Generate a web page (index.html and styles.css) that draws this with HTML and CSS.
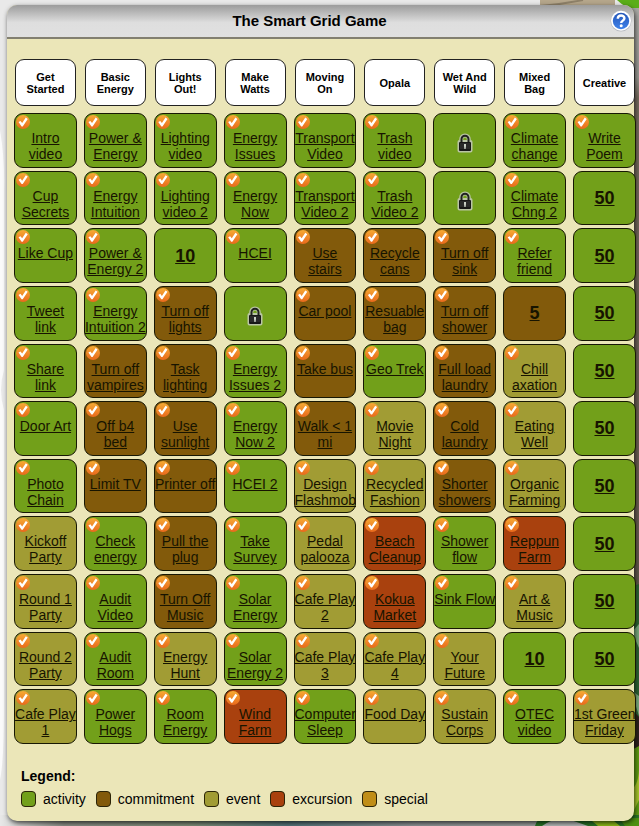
FILE: index.html
```html
<!DOCTYPE html>
<html lang="en">
<head>
<meta charset="utf-8">
<meta name="viewport" content="width=device-width, initial-scale=1">
<title>The Smart Grid Game</title>
<link rel="stylesheet" href="styles.css">
</head>
<body>
<svg width="0" height="0" class="defs" aria-hidden="true">
  <symbol id="lock" viewBox="0 0 16 20">
    <path d="M4.2 9V6.2a3.8 3.8 0 0 1 7.6 0V9M2.5 9h11v8.500h-11z" fill="none" stroke="#b9c4a4" stroke-width="4" stroke-linejoin="round"/>
    <path d="M4.500 9.500V6.200a3.500 3.500 0 0 1 7 0v3.300" fill="none" stroke="#20221f" stroke-width="2"/>
    <rect x="2" y="9" width="12" height="9" rx="1" fill="#171717"/>
    <path d="M3 11h10M3 13h10M3 15h10" stroke="#3c3c3c" stroke-width="1"/>
    <path d="M7 11h2v2l-.4 3H7.400L7 13z" fill="#c9cfc4"/>
  </symbol>
</svg>
<svg class="scenery" viewBox="0 0 639 826" preserveAspectRatio="none" aria-hidden="true">
  <defs>
    <linearGradient id="trunk" x1="0" y1="0" x2="0" y2="1">
      <stop offset="0" stop-color="#a8a8a4"/><stop offset=".1" stop-color="#969590"/>
      <stop offset=".13" stop-color="#74695c"/><stop offset=".75" stop-color="#665a50"/><stop offset="1" stop-color="#4c4a3c"/>
    </linearGradient>
    <linearGradient id="ground" x1="0" y1="0" x2="1" y2="0">
      <stop offset="0" stop-color="#e8e8e8"/><stop offset=".1" stop-color="#8b8f86"/><stop offset=".3" stop-color="#7f8e78"/>
      <stop offset=".45" stop-color="#54757a"/><stop offset=".65" stop-color="#8f9496"/><stop offset="1" stop-color="#a5a9a3"/>
    </linearGradient>
  </defs>
  <path d="M0 130q5 30 4 60v180q-6 20 0 40v300q0 50-4 70z" fill="#fafafa"/>
  <path d="M540 0h75v9h-75z" fill="#b5a68b"/>
  <path d="M541 6q22-2 42-6" stroke="#8e8068" stroke-width="2" fill="none"/>
  <path d="M617 0h22v9q-12 1-22-9z" fill="#5aae19"/>
  <path d="M628 8h11v692h-11z" fill="url(#trunk)"/>
  <path d="M628 588l11-4v242h-11z" fill="#2c6132"/>
  <path d="M632 632l7-8v24zM631 690l8 6v20z" fill="#77a67a"/>
  <path d="M628 705l11 12v32h-11z" fill="#2b211b"/>
  <path d="M628 752l11-6v80h-20z" fill="#5f9b12"/>
  <path d="M630 790q8-3 9-20v30l-9 18z" fill="#a7c62c"/>
  <path d="M0 815h639v11H0z" fill="url(#ground)"/>
  <path d="M535 826q3-10 14-11h90v11z" fill="#287425"/>
  <path d="M542 826q12-9 26-7l20 7z" fill="#b4b9b7"/>
  <path d="M586 816h22l12 10h-22z" fill="#8dbb18"/>
  <path d="M619 818h20v8h-14z" fill="#4d9212"/>
</svg>

<main class="panel">
  <header class="panel-header">
    <h1>The Smart Grid Game</h1>
    <button class="help" type="button" aria-label="Help">
      <svg viewBox="0 0 22 22" aria-hidden="true">
        <defs><linearGradient id="blue" x1="0" y1="0" x2="0" y2="1"><stop offset="0" stop-color="#2456b8"/><stop offset="1" stop-color="#3f82ea"/></linearGradient></defs>
        <circle cx="11" cy="11" r="10.500" fill="#b5b8bf"/>
        <circle cx="11" cy="10.800" r="10" fill="#fff"/>
        <circle cx="11" cy="11" r="8.200" fill="url(#blue)"/>
        <path d="M7.800 8.700c0-4.300 6.600-4.100 6.600-.4 0 2.300-3.200 2.300-3.200 4.700" fill="none" stroke="#fff" stroke-width="2.400"/>
        <circle cx="11.200" cy="15.800" r="1.500" fill="#fff"/>
      </svg>
    </button>
  </header>

  <table class="board">
    <thead>
      <tr>
        <th scope="col"><span>Get<br>Started</span></th>
        <th scope="col"><span>Basic<br>Energy</span></th>
        <th scope="col"><span>Lights<br>Out!</span></th>
        <th scope="col"><span>Make<br>Watts</span></th>
        <th scope="col"><span>Moving<br>On</span></th>
        <th scope="col"><span>Opala</span></th>
        <th scope="col"><span>Wet And<br>Wild</span></th>
        <th scope="col"><span>Mixed<br>Bag</span></th>
        <th scope="col"><span>Creative</span></th>
      </tr>
    </thead>
    <tbody>
      <tr>
        <td class="activity done"><a href="#">Intro<br>video</a></td>
        <td class="activity done"><a href="#">Power &amp;<br>Energy</a></td>
        <td class="activity done"><a href="#">Lighting<br>video</a></td>
        <td class="activity done"><a href="#">Energy<br>Issues</a></td>
        <td class="activity done"><a href="#">Transport<br>Video</a></td>
        <td class="activity done"><a href="#">Trash<br>video</a></td>
        <td class="activity locked"><svg class="lock" role="img" aria-label="Locked"><use href="#lock"/></svg></td>
        <td class="activity done"><a href="#">Climate<br>change</a></td>
        <td class="activity done"><a href="#">Write<br>Poem</a></td>
      </tr>
      <tr>
        <td class="activity done"><a href="#">Cup<br>Secrets</a></td>
        <td class="activity done"><a href="#">Energy<br>Intuition</a></td>
        <td class="activity done"><a href="#">Lighting<br>video 2</a></td>
        <td class="activity done"><a href="#">Energy<br>Now</a></td>
        <td class="activity done"><a href="#">Transport<br>Video 2</a></td>
        <td class="activity done"><a href="#">Trash<br>Video 2</a></td>
        <td class="activity locked"><svg class="lock" role="img" aria-label="Locked"><use href="#lock"/></svg></td>
        <td class="activity done"><a href="#">Climate<br>Chng 2</a></td>
        <td class="activity points"><a href="#">50</a></td>
      </tr>
      <tr>
        <td class="activity done"><a href="#">Like Cup</a></td>
        <td class="activity done"><a href="#">Power &amp;<br>Energy 2</a></td>
        <td class="activity points"><a href="#">10</a></td>
        <td class="activity done"><a href="#">HCEI</a></td>
        <td class="commitment done"><a href="#">Use<br>stairs</a></td>
        <td class="commitment done"><a href="#">Recycle<br>cans</a></td>
        <td class="commitment done"><a href="#">Turn off<br>sink</a></td>
        <td class="activity done"><a href="#">Refer<br>friend</a></td>
        <td class="activity points"><a href="#">50</a></td>
      </tr>
      <tr>
        <td class="activity done"><a href="#">Tweet<br>link</a></td>
        <td class="activity done"><a href="#">Energy<br>Intuition 2</a></td>
        <td class="commitment done"><a href="#">Turn off<br>lights</a></td>
        <td class="activity locked"><svg class="lock" role="img" aria-label="Locked"><use href="#lock"/></svg></td>
        <td class="commitment done"><a href="#">Car pool</a></td>
        <td class="commitment done"><a href="#">Resuable<br>bag</a></td>
        <td class="commitment done"><a href="#">Turn off<br>shower</a></td>
        <td class="commitment points"><a href="#">5</a></td>
        <td class="activity points"><a href="#">50</a></td>
      </tr>
      <tr>
        <td class="activity done"><a href="#">Share<br>link</a></td>
        <td class="commitment done"><a href="#">Turn off<br>vampires</a></td>
        <td class="commitment done"><a href="#">Task<br>lighting</a></td>
        <td class="activity done"><a href="#">Energy<br>Issues 2</a></td>
        <td class="commitment done"><a href="#">Take bus</a></td>
        <td class="activity done"><a href="#">Geo Trek</a></td>
        <td class="commitment done"><a href="#">Full load<br>laundry</a></td>
        <td class="event done"><a href="#">Chill<br>axation</a></td>
        <td class="activity points"><a href="#">50</a></td>
      </tr>
      <tr>
        <td class="activity done"><a href="#">Door Art</a></td>
        <td class="commitment done"><a href="#">Off b4<br>bed</a></td>
        <td class="commitment done"><a href="#">Use<br>sunlight</a></td>
        <td class="activity done"><a href="#">Energy<br>Now 2</a></td>
        <td class="commitment done"><a href="#">Walk &lt; 1<br>mi</a></td>
        <td class="event done"><a href="#">Movie<br>Night</a></td>
        <td class="commitment done"><a href="#">Cold<br>laundry</a></td>
        <td class="event done"><a href="#">Eating<br>Well</a></td>
        <td class="activity points"><a href="#">50</a></td>
      </tr>
      <tr>
        <td class="activity done"><a href="#">Photo<br>Chain</a></td>
        <td class="commitment done"><a href="#">Limit TV</a></td>
        <td class="commitment done"><a href="#">Printer off</a></td>
        <td class="activity done"><a href="#">HCEI 2</a></td>
        <td class="event done"><a href="#">Design<br>Flashmob</a></td>
        <td class="event done"><a href="#">Recycled<br>Fashion</a></td>
        <td class="commitment done"><a href="#">Shorter<br>showers</a></td>
        <td class="event done"><a href="#">Organic<br>Farming</a></td>
        <td class="activity points"><a href="#">50</a></td>
      </tr>
      <tr>
        <td class="event done"><a href="#">Kickoff<br>Party</a></td>
        <td class="activity done"><a href="#">Check<br>energy</a></td>
        <td class="commitment done"><a href="#">Pull the<br>plug</a></td>
        <td class="activity done"><a href="#">Take<br>Survey</a></td>
        <td class="event done"><a href="#">Pedal<br>palooza</a></td>
        <td class="excursion done"><a href="#">Beach<br>Cleanup</a></td>
        <td class="activity done"><a href="#">Shower<br>flow</a></td>
        <td class="excursion done"><a href="#">Reppun<br>Farm</a></td>
        <td class="activity points"><a href="#">50</a></td>
      </tr>
      <tr>
        <td class="event done"><a href="#">Round 1<br>Party</a></td>
        <td class="activity done"><a href="#">Audit<br>Video</a></td>
        <td class="commitment done"><a href="#">Turn Off<br>Music</a></td>
        <td class="activity done"><a href="#">Solar<br>Energy</a></td>
        <td class="event done"><a href="#">Cafe Play<br>2</a></td>
        <td class="excursion done"><a href="#">Kokua<br>Market</a></td>
        <td class="activity done"><a href="#">Sink Flow</a></td>
        <td class="event done"><a href="#">Art &amp;<br>Music</a></td>
        <td class="activity points"><a href="#">50</a></td>
      </tr>
      <tr>
        <td class="event done"><a href="#">Round 2<br>Party</a></td>
        <td class="activity done"><a href="#">Audit<br>Room</a></td>
        <td class="event done"><a href="#">Energy<br>Hunt</a></td>
        <td class="activity done"><a href="#">Solar<br>Energy 2</a></td>
        <td class="event done"><a href="#">Cafe Play<br>3</a></td>
        <td class="event done"><a href="#">Cafe Play<br>4</a></td>
        <td class="event done"><a href="#">Your<br>Future</a></td>
        <td class="activity points"><a href="#">10</a></td>
        <td class="activity points"><a href="#">50</a></td>
      </tr>
      <tr>
        <td class="event done"><a href="#">Cafe Play<br>1</a></td>
        <td class="activity done"><a href="#">Power<br>Hogs</a></td>
        <td class="activity done"><a href="#">Room<br>Energy</a></td>
        <td class="excursion done"><a href="#">Wind<br>Farm</a></td>
        <td class="activity done"><a href="#">Computer<br>Sleep</a></td>
        <td class="event done"><a href="#">Food Day</a></td>
        <td class="event done"><a href="#">Sustain<br>Corps</a></td>
        <td class="activity done"><a href="#">OTEC<br>video</a></td>
        <td class="event done"><a href="#">1st Green<br>Friday</a></td>
      </tr>
    </tbody>
  </table>

  <section class="legend">
    <h2>Legend:</h2>
    <ul>
      <li><span class="swatch activity"></span>activity</li>
      <li><span class="swatch commitment"></span>commitment</li>
      <li><span class="swatch event"></span>event</li>
      <li><span class="swatch excursion"></span>excursion</li>
      <li><span class="swatch special"></span>special</li>
    </ul>
  </section>
</main>
</body>
</html>
```
FILE: styles.css
```css
* { box-sizing: border-box; }

body {
  margin: 0;
  padding: 5px 5px 5px 7px;
  position: relative;
  overflow: hidden;
  background: #e9e9e9;
  color: #000;
  font-family: "Liberation Sans", Arial, sans-serif;
  font-size: 14px;
}

.defs { position: absolute; }

.scenery {
  position: absolute;
  inset: 0;
  width: 100%;
  height: 100%;
}

.panel {
  position: relative;
  background: #ebe6b8;
  border-radius: 10px;
  box-shadow: 1px 2px 5px rgba(0, 0, 0, 0.7);
}

.panel-header {
  display: flex;
  align-items: center;
  height: 34px;
  padding: 0 2px;
  border-bottom: 2px solid #827f70;
  border-radius: 10px 10px 0 0;
  background: linear-gradient(#9c9c9c, #dedede 55%, #e0e0e0);
}

h1 {
  flex: 1;
  margin: 0;
  text-align: center;
  font-size: 15px;
  line-height: 18px;
}

.help {
  width: 22px;
  height: 22px;
  padding: 0;
  border: 0;
  background: none;
}

.help svg { display: block; }

/* The last column reaches past the panel's right edge. */
.board {
  width: calc(100% + 9px);
  height: 692px;
  margin-top: 16px;
  table-layout: fixed;
  border-collapse: separate;
  border-spacing: 7px 3px;
}

th {
  height: 52px;
  padding: 1px 1px 4px;
}

th span {
  display: flex;
  align-items: center;
  justify-content: center;
  height: 47px;
  border: 1px solid #222;
  border-radius: 9px;
  background: #fff;
  font-size: 11px;
  line-height: 12px;
}

td {
  position: relative;
  padding: 16px 0 0;
  border: 1px solid #171704;
  border-radius: 9px;
  text-align: center;
  vertical-align: top;
  line-height: 16px;
  white-space: nowrap;
}

td a { color: #171400; }

.points,
.locked {
  padding: 0;
  vertical-align: middle;
}

.points {
  font-size: 18px;
  font-weight: bold;
  line-height: 20px;
}

.lock {
  display: block;
  width: 16px;
  height: 20px;
  margin: 6px auto 0;
}

.activity { background: #72a01a; }
.commitment { background: #825a0b; }
.event { background: #a19c34; }
.excursion { background: #a9410e; }
.special { background: #c08e18; }

/* Completed mark: orange disc with a white tick. */
.done::before,
.done::after {
  content: "";
  position: absolute;
  top: 1px;
  left: 1px;
  width: 14px;
  height: 14px;
}

.done::before {
  border-radius: 50%;
  background: linear-gradient(#f6ab35, #e9691c);
}

.done::after {
  background: #fff;
  clip-path: polygon(18% 50%, 32% 42%, 44% 58%, 70% 18%, 84% 28%, 48% 82%, 40% 82%);
}

.legend { padding: 21px 14px 13px; }

.legend h2 {
  margin: 0;
  font-size: 14px;
  line-height: 16px;
}

.legend ul {
  display: flex;
  gap: 10px;
  margin: 6px 0 0;
  padding: 0;
  list-style: none;
}

.legend li {
  display: flex;
  align-items: center;
  gap: 7px;
  line-height: 18px;
}

.swatch {
  width: 15px;
  height: 16px;
  border: 1px solid #2b2408;
  border-radius: 4px;
}
```
